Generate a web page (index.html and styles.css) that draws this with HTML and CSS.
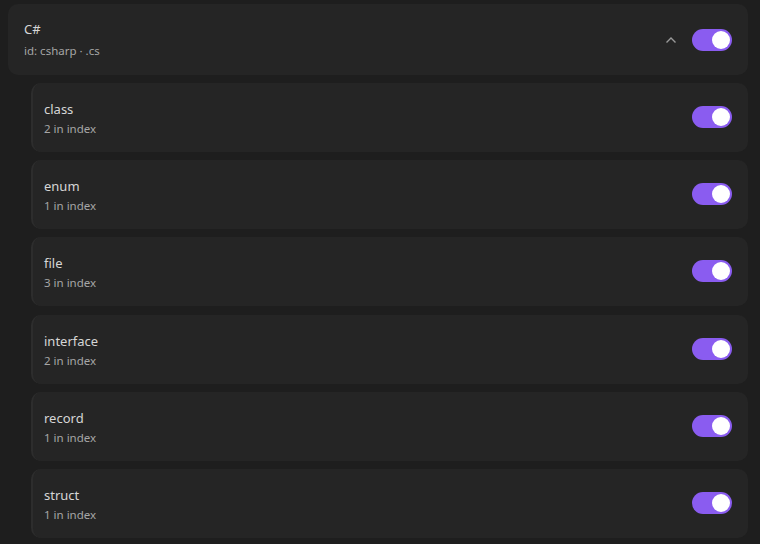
FILE: index.html
```html
<!DOCTYPE html>
<html lang="en">

<head>
    <meta charset="UTF-8">
    <meta name="viewport" content="width=device-width, initial-scale=1.0">
    <title>Language Settings</title>
    <link rel="stylesheet" href="styles.css">
</head>

<body>
    <div class="lang-group">
        <div class="lang-header">
            <div class="item-text">
                <div class="item-title">C#</div>
                <div class="item-sub">id: csharp · .cs</div>
            </div>
            <svg class="chevron" width="12" height="8" viewBox="0 0 12 8">
                <path d="M1.5 6.5 L6 2 L10.5 6.5" fill="none" stroke="#9a9a9a" stroke-width="1.4" />
            </svg>
            <label class="toggle"><input type="checkbox" checked><span class="knob"></span></label>
        </div>

        <div class="kind-list">
            <div class="kind-card">
                <div class="item-text">
                    <div class="item-title">class</div>
                    <div class="item-sub">2 in index</div>
                </div>
                <label class="toggle"><input type="checkbox" checked><span class="knob"></span></label>
            </div>
            <div class="kind-card">
                <div class="item-text">
                    <div class="item-title">enum</div>
                    <div class="item-sub">1 in index</div>
                </div>
                <label class="toggle"><input type="checkbox" checked><span class="knob"></span></label>
            </div>
            <div class="kind-card">
                <div class="item-text">
                    <div class="item-title">file</div>
                    <div class="item-sub">3 in index</div>
                </div>
                <label class="toggle"><input type="checkbox" checked><span class="knob"></span></label>
            </div>
            <div class="kind-card">
                <div class="item-text">
                    <div class="item-title">interface</div>
                    <div class="item-sub">2 in index</div>
                </div>
                <label class="toggle"><input type="checkbox" checked><span class="knob"></span></label>
            </div>
            <div class="kind-card">
                <div class="item-text">
                    <div class="item-title">record</div>
                    <div class="item-sub">1 in index</div>
                </div>
                <label class="toggle"><input type="checkbox" checked><span class="knob"></span></label>
            </div>
            <div class="kind-card">
                <div class="item-text">
                    <div class="item-title">struct</div>
                    <div class="item-sub">1 in index</div>
                </div>
                <label class="toggle"><input type="checkbox" checked><span class="knob"></span></label>
            </div>
        </div>
    </div>
</body>

</html>
```

FILE: styles.css
```css
body {
    font-family: "Noto Sans", "Open Sans", sans-serif;
    margin: 0;
    padding: 4px 12px 0 8px;
    background-color: #1e1e1e;
    color: #d4d4d4;
}

.lang-group {
    display: flex;
    flex-direction: column;
    gap: 8px;
}

.lang-header,
.kind-card {
    display: flex;
    align-items: center;
    background-color: #252525;
    border-radius: 10px;
    padding: 15px 16px;
}

.kind-list {
    display: flex;
    flex-direction: column;
    gap: 8.2px;
    margin-left: 23px;
}

.kind-card {
    border-left: 2px solid #2d2d2d;
    padding: 15px 16px 15px 11px;
}

.kind-card .toggle {
    margin-top: -1px;
}

.item-text {
    flex: 1;
    display: flex;
    flex-direction: column;
    gap: 3px;
}

.kind-card .item-text {
    gap: 1px;
    padding-top: 1px;
    margin-bottom: -1px;
}

.item-title {
    font-size: 13px;
    line-height: 20px;
    color: #d6d6d6;
}

.item-sub {
    font-size: 11.5px;
    line-height: 18px;
    color: #a6a6a6;
}

.chevron {
    margin-right: 15px;
}

.toggle {
    position: relative;
    width: 40px;
    height: 22px;
    border-radius: 11px;
    background-color: #8a5cf0;
    cursor: pointer;
}

.toggle input {
    display: none;
}

.toggle .knob {
    position: absolute;
    top: 2px;
    right: 2px;
    width: 18px;
    height: 18px;
    border-radius: 50%;
    background-color: white;
}
```
